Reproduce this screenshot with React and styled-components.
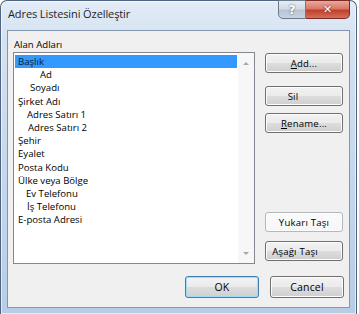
import React from 'react';
import styled, { createGlobalStyle, css } from 'styled-components';

const GlobalStyle = createGlobalStyle`
  html, body { margin: 0; padding: 0; background: #ffffff; }
  body { font-family: "Open Sans", "Noto Sans", sans-serif; }
`;

const Frame = styled.div`
  width: 357px;
  height: 314px;
  box-sizing: border-box;
  border: 1px solid #4e6480;
  border-bottom: none;
  border-radius: 7px 7px 0 0;
  background: linear-gradient(180deg, #e3ecf7 0%, #d5e2f1 12%, #c3d6ec 60%, #b7cde6 100%);
  display: flex;
  flex-direction: column;
  box-shadow: inset 0 0 0 1px rgba(255, 255, 255, 0.6);
`;

const TitleBar = styled.div`
  height: 29px;
  display: flex;
  align-items: flex-start;
  justify-content: space-between;
  padding: 0 6px 0 7px;
`;

const TitleText = styled.div`
  font-size: 11px;
  color: #1e1e1e;
  padding-top: 5px;
  letter-spacing: -0.1px;
`;

const Caption = styled.div`
  display: flex;
  margin-top: -1px;
`;

const CaptionButton = styled.div`
  height: 19px;
  box-sizing: border-box;
  border: 1px solid #6d7b8e;
  display: flex;
  align-items: center;
  justify-content: center;
  color: #fff;
  font-family: "DejaVu Sans", sans-serif;
  font-weight: bold;
  ${(p) =>
    p.$close
      ? css`
          width: 44px;
          border-color: #7a2b26;
          border-left: none;
          border-radius: 0 0 5px 0;
          background: linear-gradient(180deg, #e8a99d 0%, #d97867 45%, #c0402c 55%, #d2705c 100%);
          font-size: 11px;
          text-shadow: 0 0 2px #6b1a10;
        `
      : css`
          width: 28px;
          border-radius: 0 0 0 5px;
          background: linear-gradient(180deg, #e6ecf3 0%, #d2dbe6 45%, #b8c4d3 55%, #c9d4e1 100%);
          font-size: 12px;
          text-shadow: 0 0 2px #3f4b5a;
        `}
`;

const Client = styled.div`
  flex: 1;
  margin: 0 6px 6px;
  border: 1px solid #8396b0;
  background: #f0f0f0;
  display: flex;
  flex-direction: column;
  padding: 6px 5px 8px 5px;
  font-size: 9.6px;
  color: #000;
`;

const Label = styled.div`
  height: 15px;
  line-height: 16px;
  padding-left: 1px;
`;

const Body = styled.div`
  display: flex;
  gap: 10px;
`;

const ListBox = styled.div`
  width: 242px;
  height: 212px;
  box-sizing: border-box;
  border: 1px solid #828790;
  background: #ffffff;
  display: flex;
`;

const Items = styled.div`
  flex: 1;
  padding: 2px 1px;
`;

const Item = styled.div`
  height: 13.2px;
  line-height: 13px;
  padding-left: ${(p) => p.$indent}px;
  white-space: nowrap;
  ${(p) =>
    p.$selected &&
    css`
      background: #3399ff;
      color: #0a1a33;
    `}
`;

const ScrollBar = styled.div`
  width: 16px;
  background: #f7f7f7;
  display: flex;
  flex-direction: column;
  justify-content: space-between;
  align-items: center;
  padding: 9px 0 8px;
`;

const Arrow = styled.div`
  width: 0;
  height: 0;
  border-left: 3px solid transparent;
  border-right: 3px solid transparent;
  ${(p) =>
    p.$down
      ? css`border-top: 3px solid #a8a8a8;`
      : css`border-bottom: 3px solid #a8a8a8;`}
`;

const Side = styled.div`
  width: 78px;
  display: flex;
  flex-direction: column;
  padding-top: 1px;
`;

const Button = styled.div`
  height: 20px;
  box-sizing: border-box;
  border: 1px solid #707070;
  border-radius: 3px;
  display: flex;
  align-items: center;
  justify-content: center;
  padding-right: ${(p) => p.$shift || 0}px;
  margin-top: ${(p) => p.$gap || 0}px;
  background: linear-gradient(180deg, #f2f2f2 0%, #ebebeb 48%, #dddddd 52%, #cfcfcf 100%);
  box-shadow: inset 0 0 0 1px #fcfcfc;
  letter-spacing: 0.2px;
  ${(p) =>
    p.$flat &&
    css`
      border-color: #b4b9bf;
      background: linear-gradient(180deg, #fbfbfb 0%, #f6f6f6 100%);
    `}
  ${(p) =>
    p.$default &&
    css`
      border-color: #3c7fb1;
      box-shadow: inset 0 0 0 1px #9fdcf5;
      background: linear-gradient(180deg, #f4f4f4 0%, #eaeaea 48%, #dcdcdc 52%, #d0d0d0 100%);
    `}
  u { text-decoration: underline; }
`;

const Footer = styled.div`
  display: flex;
  justify-content: flex-end;
  gap: 11px;
  margin-top: 12px;
`;

const WideButton = styled(Button)`
  width: 74px;
  height: 22px;
  font-size: 10.5px;
`;

const items = [
  { t: 'Başlık', i: 3, s: true },
  { t: 'Ad', i: 25 },
  { t: 'Soyadı', i: 15 },
  { t: 'Şirket Adı', i: 3 },
  { t: 'Adres Satırı 1', i: 12 },
  { t: 'Adres Satırı 2', i: 13 },
  { t: 'Şehir', i: 3 },
  { t: 'Eyalet', i: 3 },
  { t: 'Posta Kodu', i: 3 },
  { t: 'Ülke veya Bölge', i: 3 },
  { t: 'Ev Telefonu', i: 11 },
  { t: 'İş Telefonu', i: 12 },
  { t: 'E-posta Adresi', i: 3 },
];

export default function App() {
  return (
    <>
      <GlobalStyle />
      <Frame>
        <TitleBar>
          <TitleText>Adres Listesini Özelleştir</TitleText>
          <Caption>
            <CaptionButton>?</CaptionButton>
            <CaptionButton $close>✕</CaptionButton>
          </Caption>
        </TitleBar>
        <Client>
          <Label>Alan Adları</Label>
          <Body>
            <ListBox>
              <Items>
                {items.map((it) => (
                  <Item key={it.t} $indent={it.i} $selected={it.s}>
                    {it.t}
                  </Item>
                ))}
              </Items>
              <ScrollBar>
                <Arrow />
                <Arrow $down />
              </ScrollBar>
            </ListBox>
            <Side>
              <Button><span><u>A</u>dd...</span></Button>
              <Button $gap={13} $shift={22}>Sil</Button>
              <Button $gap={7}><span><u>R</u>ename...</span></Button>
              <Button $gap={79} $flat>Yukarı Taşı</Button>
              <Button $gap={9} $shift={18}>Aşağı Taşı</Button>
            </Side>
          </Body>
          <Footer>
            <WideButton $default>OK</WideButton>
            <WideButton>Cancel</WideButton>
          </Footer>
        </Client>
      </Frame>
    </>
  );
}
